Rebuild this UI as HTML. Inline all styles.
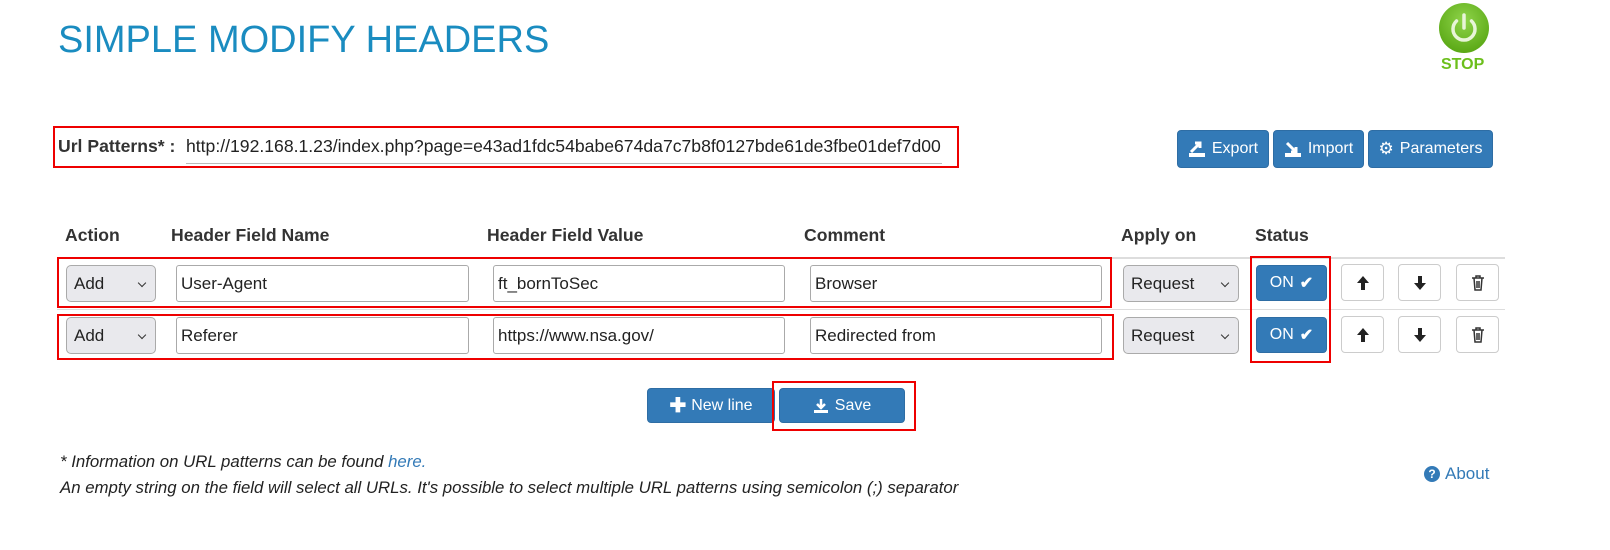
<!DOCTYPE html>
<html><head><meta charset="utf-8"><style>
*{box-sizing:border-box;margin:0;padding:0}
body{width:1610px;height:550px;background:#fff;font-family:"Liberation Sans",Arial,sans-serif;color:#333;position:relative;overflow:hidden;font-size:16px}
.a{position:absolute}
.btn{position:absolute;background:#337ab7;border:1px solid #2e6da4;border-radius:4px;color:#fff;font-size:16px;display:flex;align-items:center;justify-content:center;gap:6px}
.inp{position:absolute;border:1px solid #aaa;border-radius:3px;height:37px;padding-left:4px;font-size:17px;line-height:35px;color:#222;background:#fff}
.sel{position:absolute;border:1px solid #aaa;border-radius:5px;height:37px;background:#e9e9ed;font-size:17px;line-height:35px;padding-left:7px;color:#222}
.sel:after{content:"";position:absolute;right:10px;top:14px;width:5px;height:5px;border-right:1.5px solid #333;border-bottom:1.5px solid #333;transform:rotate(45deg)}
.red{position:absolute;border:2px solid #e00}
.ib{position:absolute;border:1px solid #ccc;border-radius:4px;height:37px;width:43px;background:#fff;display:flex;align-items:center;justify-content:center}
.h{position:absolute;top:225px;font-weight:bold;font-size:17.6px;color:#333}
</style></head><body>
<div class="a" style="left:58px;top:19px;font-size:38px;color:#1a8cc0">SIMPLE MODIFY HEADERS</div>
<svg class="a" style="left:1438px;top:2px" width="52" height="52" viewBox="0 0 52 52"><defs><radialGradient id="g" cx="50%" cy="35%" r="65%"><stop offset="0" stop-color="#8fd44a"/><stop offset="1" stop-color="#5aa815"/></radialGradient></defs><circle cx="26" cy="26" r="25" fill="url(#g)"/><path d="M18.5 19a11 11 0 1 0 15 0" fill="none" stroke="#e8f5d8" stroke-width="3.5" stroke-linecap="round"/><line x1="26" y1="13" x2="26" y2="26" stroke="#e8f5d8" stroke-width="3.5" stroke-linecap="round"/></svg>
<div class="a" style="left:1441px;top:56px;font-size:16px;font-weight:bold;color:#6cbf1c">STOP</div>

<div class="red" style="left:53px;top:126px;width:906px;height:42px"></div>
<div class="a" style="left:58px;top:136px;font-weight:bold;font-size:17.6px">Url Patterns* :</div>
<div class="a" style="left:186px;top:136px;font-size:17.6px;color:#222;width:756px;overflow:hidden;white-space:nowrap;border-bottom:1px solid #bbb;height:28px">http://192.168.1.23/index.php?page=e43ad1fdc54babe674da7c7b8f0127bde61de3fbe01def7d00</div>

<div class="btn" style="left:1177px;top:130px;width:92px;height:38px"><svg width="18" height="18" viewBox="0 0 18 18"><rect x="1" y="13" width="16" height="4" fill="#fff"/><path d="M3 12l9-9M7 3h5v5" stroke="#fff" stroke-width="3" fill="none"/></svg>Export</div>
<div class="btn" style="left:1273px;top:130px;width:91px;height:38px"><svg width="18" height="18" viewBox="0 0 18 18"><rect x="1" y="13" width="16" height="4" fill="#fff"/><path d="M12 12L3 3M7 12h5V7" stroke="#fff" stroke-width="3" fill="none"/></svg>Import</div>
<div class="btn" style="left:1368px;top:130px;width:125px;height:38px"><span style="font-size:17px">⚙</span>Parameters</div>

<div class="h" style="left:65px">Action</div>
<div class="h" style="left:171px">Header Field Name</div>
<div class="h" style="left:487px">Header Field Value</div>
<div class="h" style="left:804px">Comment</div>
<div class="h" style="left:1121px">Apply on</div>
<div class="h" style="left:1255px">Status</div>
<div class="a" style="left:57px;top:257px;width:1448px;height:2px;background:#ddd"></div>
<div class="a" style="left:57px;top:309px;width:1448px;height:1px;background:#ddd"></div>

<div class="sel" style="left:66px;top:265px;width:90px">Add</div>
<div class="inp" style="left:176px;top:265px;width:293px">User-Agent</div>
<div class="inp" style="left:493px;top:265px;width:292px">ft_bornToSec</div>
<div class="inp" style="left:810px;top:265px;width:292px">Browser</div>
<div class="sel" style="left:1123px;top:265px;width:116px">Request</div>
<div class="btn" style="left:1256px;top:265px;width:71px;height:36px">ON <b>✔</b></div>
<div class="ib" style="left:1341px;top:264px"><svg width="14" height="16" viewBox="0 0 14 16"><path d="M7 1L1 8h4v7h4V8h4z" fill="#222"/></svg></div>
<div class="ib" style="left:1398px;top:264px"><svg width="14" height="16" viewBox="0 0 14 16"><path d="M7 15L1 8h4V1h4v7h4z" fill="#222"/></svg></div>
<div class="ib" style="left:1456px;top:264px"><svg width="14" height="16" viewBox="0 0 14 16"><path d="M1 3h12M5 3V1h4v2M3 3l1 12h6l1-12M6 6v7M8 6v7" stroke="#333" stroke-width="1.5" fill="none"/></svg></div>

<div class="sel" style="left:66px;top:317px;width:90px">Add</div>
<div class="inp" style="left:176px;top:317px;width:293px">Referer</div>
<div class="inp" style="left:493px;top:317px;width:292px">https://www.nsa.gov/</div>
<div class="inp" style="left:810px;top:317px;width:292px">Redirected from</div>
<div class="sel" style="left:1123px;top:317px;width:116px">Request</div>
<div class="btn" style="left:1256px;top:317px;width:71px;height:36px">ON <b>✔</b></div>
<div class="ib" style="left:1341px;top:316px"><svg width="14" height="16" viewBox="0 0 14 16"><path d="M7 1L1 8h4v7h4V8h4z" fill="#222"/></svg></div>
<div class="ib" style="left:1398px;top:316px"><svg width="14" height="16" viewBox="0 0 14 16"><path d="M7 15L1 8h4V1h4v7h4z" fill="#222"/></svg></div>
<div class="ib" style="left:1456px;top:316px"><svg width="14" height="16" viewBox="0 0 14 16"><path d="M1 3h12M5 3V1h4v2M3 3l1 12h6l1-12M6 6v7M8 6v7" stroke="#333" stroke-width="1.5" fill="none"/></svg></div>

<div class="red" style="left:57px;top:257px;width:1055px;height:51px"></div>
<div class="red" style="left:57px;top:314px;width:1057px;height:46px"></div>
<div class="red" style="left:1250px;top:256px;width:81px;height:107px"></div>

<div class="btn" style="left:647px;top:388px;width:128px;height:35px;gap:5px"><b style="font-size:20px">✚</b>New line</div>
<div class="btn" style="left:779px;top:388px;width:126px;height:35px"><svg width="16" height="16" viewBox="0 0 16 16"><path d="M8 1v8M4 6l4 4 4-4" stroke="#fff" stroke-width="2.5" fill="none"/><rect x="1" y="12" width="14" height="3" fill="#fff"/></svg>Save</div>
<div class="red" style="left:772px;top:381px;width:144px;height:50px"></div>

<div class="a" style="left:60px;top:452px;font-style:italic;font-size:16.8px;color:#222">* Information on URL patterns can be found <span style="color:#337ab7">here.</span></div>
<div class="a" style="left:60px;top:478px;font-style:italic;font-size:16.8px;color:#222">An empty string on the field will select all URLs. It's possible to select multiple URL patterns using semicolon (;) separator</div>
<div class="a" style="left:1424px;top:464px;font-size:17px;color:#337ab7;display:flex;align-items:center;gap:5px"><span style="display:inline-block;width:16px;height:16px;border-radius:50%;background:#337ab7;color:#fff;font-size:12px;font-weight:bold;text-align:center;line-height:16px">?</span>About</div>
</body></html>
